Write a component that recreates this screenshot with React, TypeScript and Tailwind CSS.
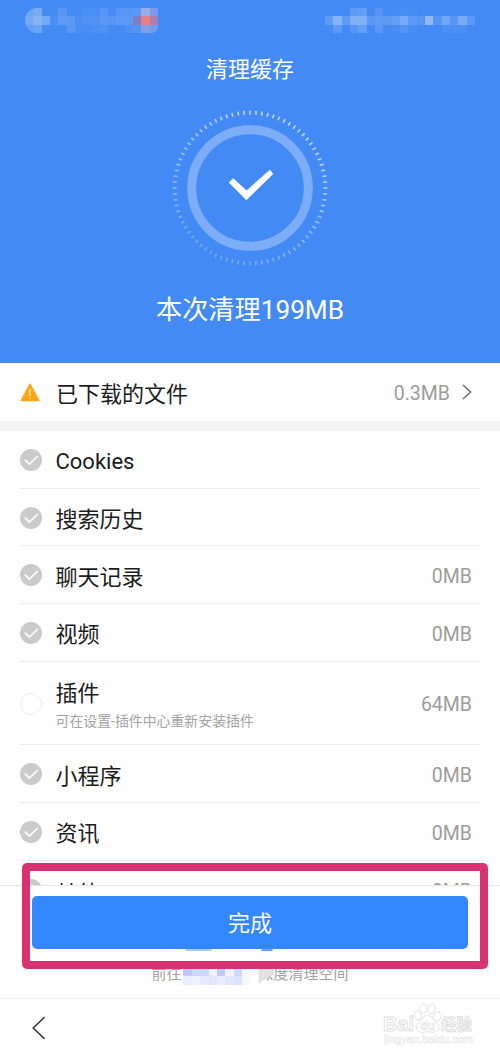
import React from 'react';
import { clsx } from 'clsx';

const items = [
  { name: "Cookies", size: "", checked: true },
  { name: "搜索历史", size: "", checked: true },
  { name: "聊天记录", size: "0MB", checked: true },
  { name: "视频", size: "0MB", checked: true },
  { name: "插件", size: "64MB", checked: false, note: "可在设置-插件中心重新安装插件" },
  { name: "小程序", size: "0MB", checked: true },
  { name: "资讯", size: "0MB", checked: true },
  { name: "其他", size: "0MB", checked: true },
];

const statusLeft = [
  ["#6ea5f7", "#78abf6", "#458bf4", "#458bf4", "#5896f6", "#458bf4", "#458bf4", "#4b8ff5", "#4b8ff5", "#5694f6", "#478cf4", "#5795f6", "#5795f6", "#5c98f6", "#98aeea", "#7f9ae8"],
  ["#75a9f6", "#86b3f6", "#75a9f6", "#4d90f5", "#5f9af6", "#5c98f6", "#4a8ef5", "#5091f5", "#5091f5", "#5b98f6", "#5694f6", "#5d99f6", "#5d99f6", "#7b7fc5", "#e77f80", "#ad7daf"],
  ["#659ef6", "#6ea4f6", "#488df4", "#458bf4", "#458bf4", "#5b98f6", "#4b8ff5", "#488df4", "#4e90f5", "#5091f5", "#458bf4", "#458bf4", "#4f91f5", "#5594f5", "#829ee5", "#7799e9"],
];

const statusRight = [
  ["#438af4", "#438af4", "#438af4", "#5f9bf6", "#629df6", "#438af4", "#5594f5", "#438af4", "#468cf4", "#498ef4", "#488df4", "#438af4", "#438af4", "#438af4", "#438af4", "#438af4", "#438af4", "#438af4"],
  ["#5d99f5", "#86b4f7", "#5d99f5", "#82b0f7", "#82b0f7", "#5b98f5", "#609bf5", "#5d99f5", "#639df5", "#77aaf6", "#5d99f5", "#5896f5", "#90baf8", "#5896f5", "#70a6f6", "#5896f5", "#78aaf6", "#5c98f5"],
  ["#468cf4", "#5d99f5", "#438af4", "#5795f5", "#659ef5", "#438af4", "#5b98f5", "#438af4", "#488df4", "#5393f5", "#488df4", "#438af4", "#438af4", "#438af4", "#4b8ff5", "#4b8ff5", "#4b8ff5", "#438af4"],
];

const hiddenName = [
  ["#bccbf7", "#cad6f9", "#cad6f9", "#f0f3fd", "#bccbf7", "#eef2fd", "#ccd9fa", "#f8f9fe"],
  ["#e8eefd", "#eef2fe", "#e5ecfd", "#e0e8fc", "#e8eefd", "#dee7fc", "#dbe4fb", "#f6f8fe"],
];

function Mosaic({ rows, className }: { rows: string[][]; className?: string }) {
  return (
    <div className={clsx("flex flex-col overflow-hidden", className)}>
      {rows.map((row, i) => (
        <div key={i} className="flex flex-1">
          {row.map((color, j) => (
            <span key={j} className="flex-1" style={{ backgroundColor: color }} />
          ))}
        </div>
      ))}
    </div>
  );
}

function DoneRing() {
  const ticks = Array.from({ length: 80 }, (_, i) => i);
  return (
    <svg className="h-[160px] w-[160px]" viewBox="-80 -80 160 160" fill="none">
      {ticks.map((i) => {
        const angle = (i * 360) / ticks.length;
        const opacity = 0.45 + 0.2 * Math.cos(((angle - 30) * Math.PI) / 180);
        return (
          <path key={i} d="M0 -77.3V-73.3" stroke="#fff" strokeWidth="1.7" opacity={opacity} transform={`rotate(${angle})`} />
        );
      })}
      <circle r="58.3" stroke="#7dadf8" strokeWidth="9" />
      <path d="M-21.2 -5.6L-16.8 -9.8L-3.4 2.4L19.8 -18.3L23.2 -13.9L-3.6 12.2Z" fill="#fff" />
    </svg>
  );
}

function CheckMark({ checked }: { checked: boolean }) {
  if (!checked) {
    return <span className="mt-px h-[22px] w-[22px] rounded-full border border-[#ececec]" />;
  }
  return (
    <svg className="mt-px h-[22px] w-[22px]" viewBox="0 0 22 22" fill="none">
      <circle cx="11" cy="11" r="11" fill="#cbcbcb" />
      <path d="M4.8 10.6L9.4 15L17.8 7" stroke="#fff" strokeWidth="1.7" />
    </svg>
  );
}

function Watermark() {
  return (
    <svg className="pointer-events-none absolute top-[1002px] left-[383px] h-[50px] w-[96px] overflow-visible" viewBox="0 0 96 50" fill="#fff" stroke="#dfdfdf" strokeWidth="0.9" fontFamily="'Liberation Sans', 'Noto Sans CJK SC', sans-serif">
      <text x="0" y="29" fontSize="20" fontWeight="bold" textLength="31" lengthAdjust="spacingAndGlyphs">Bai</text>
      <ellipse cx="34.5" cy="13.5" rx="3.5" ry="4.7" transform="rotate(-15 34.5 13.5)" />
      <ellipse cx="40.3" cy="6.6" rx="3.5" ry="5" />
      <ellipse cx="48.6" cy="7" rx="3.5" ry="5" transform="rotate(12 48.6 7)" />
      <ellipse cx="54.4" cy="14.6" rx="3.5" ry="4.7" transform="rotate(25 54.4 14.6)" />
      <path d="M44.5 13.5C40 13.5 39.3 18 36.5 20C33 22.5 32.5 28.5 37 30C40 31 42 29.7 45 29.7C48 29.7 50 31 53 29.8C57 28 56.5 23.5 53.5 20.8C50.5 18 49 13.5 44.5 13.5Z" />
      <text x="37.5" y="27.5" fontSize="13" fontWeight="bold" strokeWidth="0.7" textLength="14.5" lengthAdjust="spacingAndGlyphs">du</text>
      <text x="58" y="28" fontSize="15.5" fontWeight="bold" strokeWidth="0.8" textLength="31" lengthAdjust="spacingAndGlyphs">经验</text>
      <text x="1" y="41" fontSize="11.5" fill="#f4f4f4" stroke="#e8e8e8" strokeWidth="0.5" textLength="89" lengthAdjust="spacingAndGlyphs">jingyan.baidu.com</text>
    </svg>
  );
}

export default function App() {
  return (
    <div className="relative flex h-[1057px] w-[500px] flex-col overflow-hidden bg-[#fefefe] font-[Roboto,'Noto_Sans_CJK_SC',sans-serif] text-[22px] text-[#1c1c1c]">
      <header className="flex h-[363px] shrink-0 flex-col items-center bg-[#438af4] text-white">
        <div className="flex w-full justify-between pt-2 pr-[25px] pl-[25px]">
          <Mosaic rows={statusLeft} className="h-[25px] w-[133px] rounded-l-[12px] rounded-br-[6px]" />
          <Mosaic rows={statusRight} className="h-[25px] w-[150px]" />
        </div>
        <h1 className="mt-[21px] leading-8">清理缓存</h1>
        <div className="mt-[22px]">
          <DoneRing />
        </div>
        <p className="mt-[22px] text-[26.2px] leading-[40px]">本次清理199MB</p>
      </header>

      <div className="flex h-[58px] shrink-0 items-center pr-7 pl-5">
        <svg className="h-[19px] w-5" viewBox="0 0 20 19">
          <path d="M10 1.2L18.8 17.6H1.2Z" fill="#fca613" stroke="#fca613" strokeWidth="1.4" strokeLinejoin="round" />
          <path d="M10 6V12.8M10 14.4V16" stroke="#ffe3ae" strokeWidth="1.4" />
        </svg>
        <span className="ml-4 flex-1 pt-1">已下载的文件</span>
        <span className="pt-1 text-[19.5px] text-[#9c9c9c]">0.3MB</span>
        <svg className="ml-3 h-[16px] w-[10px]" viewBox="0 0 10 16" fill="none">
          <path d="M1 1L8.6 8L1 15" stroke="#6c6c6c" strokeWidth="1.5" />
        </svg>
      </div>
      <div className="h-[10px] shrink-0 bg-[#f4f4f4]" />

      <ul className="h-[454px] shrink-0 overflow-hidden px-5">
        {items.map((item) => (
          <li
            key={item.name}
            className={clsx("group flex items-center border-b border-[#ececec] pr-2", item.note ? "h-[83.6px]" : "h-[57.7px]")}
          >
            <CheckMark checked={item.checked} />
            <div className="ml-[13.5px] flex flex-1 flex-col">
              <span className={clsx(item.note ? "pt-1 leading-[32px]" : "pt-[5px] group-last:pt-2")}>{item.name}</span>
              {item.note && <span className="text-[13.9px] leading-[22px] text-[#a3a3a3]">{item.note}</span>}
            </div>
            <span className="pt-1 text-[19.5px] text-[#9c9c9c] group-last:pt-[6px]">{item.size}</span>
          </li>
        ))}
      </ul>

      <footer className="flex h-[113px] shrink-0 flex-col items-center border-t border-[#e6e6e6] px-8 pt-[10px]">
        <button className="h-[53px] w-full shrink-0 rounded-[5px] bg-[#3388ff] pt-0.5 text-white">完成</button>
        <div className="flex h-[14px] w-full items-start">
          <span className="ml-[153px] h-[2px] w-[27px] rounded-b bg-[#a9cdf7]" />
          <span className="ml-[49px] h-[2px] w-[12px] rounded-t-full bg-[#65a2ef]" />
        </div>
        <p className="flex h-[22px] items-center text-[15px] text-[#a2a2a2]">
          前往
          <Mosaic rows={hiddenName} className="mt-1 ml-[2px] h-[18px] w-[67px]" />
          <span className="relative ml-2">
            深
            <span className="absolute top-0 left-0 h-full w-[16px] bg-[#e2e2e2] [clip-path:polygon(0_0,100%_0,100%_50%,50%_68%,0_95%)]" />
          </span>
          度清理空间
        </p>
      </footer>

      <nav className="flex flex-1 items-center border-t border-[#f1f1f1] pl-8">
        <svg className="h-[24px] w-[14px]" viewBox="0 0 14 24" fill="none">
          <path d="M12.6 1.2L1.2 12L12.6 22.8" stroke="#3f3f3f" strokeWidth="1.6" />
        </svg>
      </nav>

      <div className="pointer-events-none absolute top-[863px] left-[21.5px] h-[106px] w-[466px] rounded-[5px] border-8 border-[#d93273]" />
      <Watermark />
    </div>
  );
}
